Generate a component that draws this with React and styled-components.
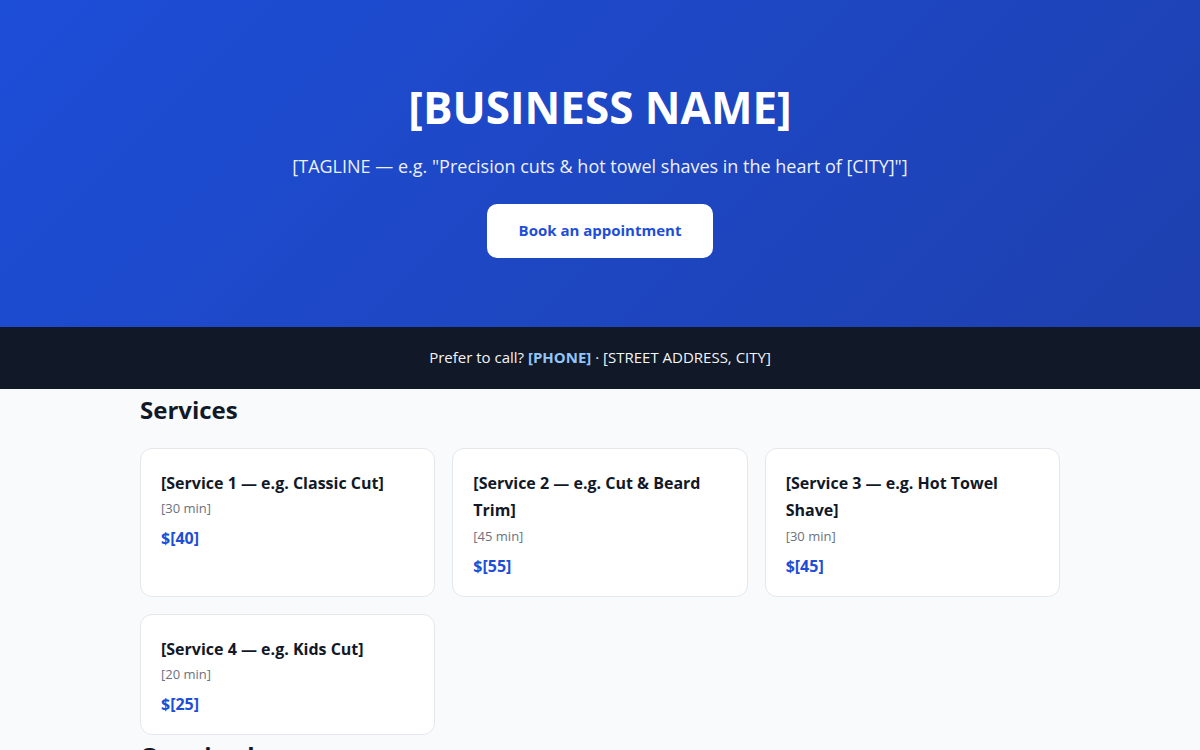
import React from 'react';
import styled, { createGlobalStyle } from 'styled-components';

const GlobalStyle = createGlobalStyle`
  * { box-sizing: border-box; }
  body {
    margin: 0;
    background: #f9fafb;
    color: #111827;
    font-family: "Segoe UI", "Open Sans", "Noto Sans", sans-serif;
    line-height: 1.7;
  }
`;

const services = [
  { name: '[Service 1 — e.g. Classic Cut]', time: '[30 min]', price: '$[40]' },
  { name: '[Service 2 — e.g. Cut & Beard Trim]', time: '[45 min]', price: '$[55]' },
  { name: '[Service 3 — e.g. Hot Towel Shave]', time: '[30 min]', price: '$[45]' },
  { name: '[Service 4 — e.g. Kids Cut]', time: '[20 min]', price: '$[25]' },
];

function App() {
  return (
    <>
      <GlobalStyle />
      <Hero>
        <Title>[BUSINESS NAME]</Title>
        <Tagline>[TAGLINE — e.g. "Precision cuts &amp; hot towel shaves in the heart of [CITY]"]</Tagline>
        <BookButton href="#book">Book an appointment</BookButton>
      </Hero>
      <CallBar>
        Prefer to call? <Phone>[PHONE]</Phone> · [STREET ADDRESS, CITY]
      </CallBar>
      <Main>
        <Section>
          <SectionTitle>Services</SectionTitle>
          <Grid>
            {services.map(s => (
              <Card key={s.name}>
                <CardName>{s.name}</CardName>
                <Duration>{s.time}</Duration>
                <Price>{s.price}</Price>
              </Card>
            ))}
          </Grid>
        </Section>
        <Section>
          <SectionTitle>Opening hours</SectionTitle>
        </Section>
      </Main>
    </>
  );
}

export default App;

const Hero = styled.header`
  background: linear-gradient(135deg, #1d4ed8 0%, #1e40af 100%);
  color: #fff;
  text-align: center;
  padding: 70px 24px 69px;
  display: flex;
  flex-direction: column;
  align-items: center;
`;

const Title = styled.h1`
  margin: 0;
  font-size: 44px;
  font-weight: 700;
  line-height: 1.7;
`;

const Tagline = styled.p`
  margin: 6px 0 0;
  font-size: 18px;
  opacity: 0.92;
`;

const BookButton = styled.a`
  margin-top: 23px;
  display: inline-block;
  background: #fff;
  color: #1d4ed8;
  font-weight: 700;
  font-size: 15px;
  text-decoration: none;
  padding: 14px 32px;
  border-radius: 10px;
`;

const CallBar = styled.div`
  background: #111827;
  color: #f3f4f6;
  text-align: center;
  font-size: 15px;
  padding: 18px 24px 19px;
`;

const Phone = styled.strong`
  color: #93c5fd;
  font-weight: 700;
`;

const Main = styled.main`
  max-width: 920px;
  margin: 0 auto;
`;

const Section = styled.section``;

const SectionTitle = styled.h2`
  margin: 1px 0 17px;
  font-size: 24px;
  font-weight: 700;
  line-height: 1.7;
`;

const Grid = styled.div`
  display: grid;
  grid-template-columns: repeat(3, 1fr);
  gap: 17px;
`;

const Card = styled.div`
  background: #fff;
  border: 1px solid #e5e7eb;
  border-radius: 12px;
  padding: 21px 20px 16px;
`;

const CardName = styled.div`
  font-size: 16px;
  font-weight: 700;
`;

const Duration = styled.div`
  font-size: 13px;
  color: #6b7280;
`;

const Price = styled.div`
  margin-top: 6px;
  font-size: 16px;
  font-weight: 700;
  color: #1d4ed8;
`;
